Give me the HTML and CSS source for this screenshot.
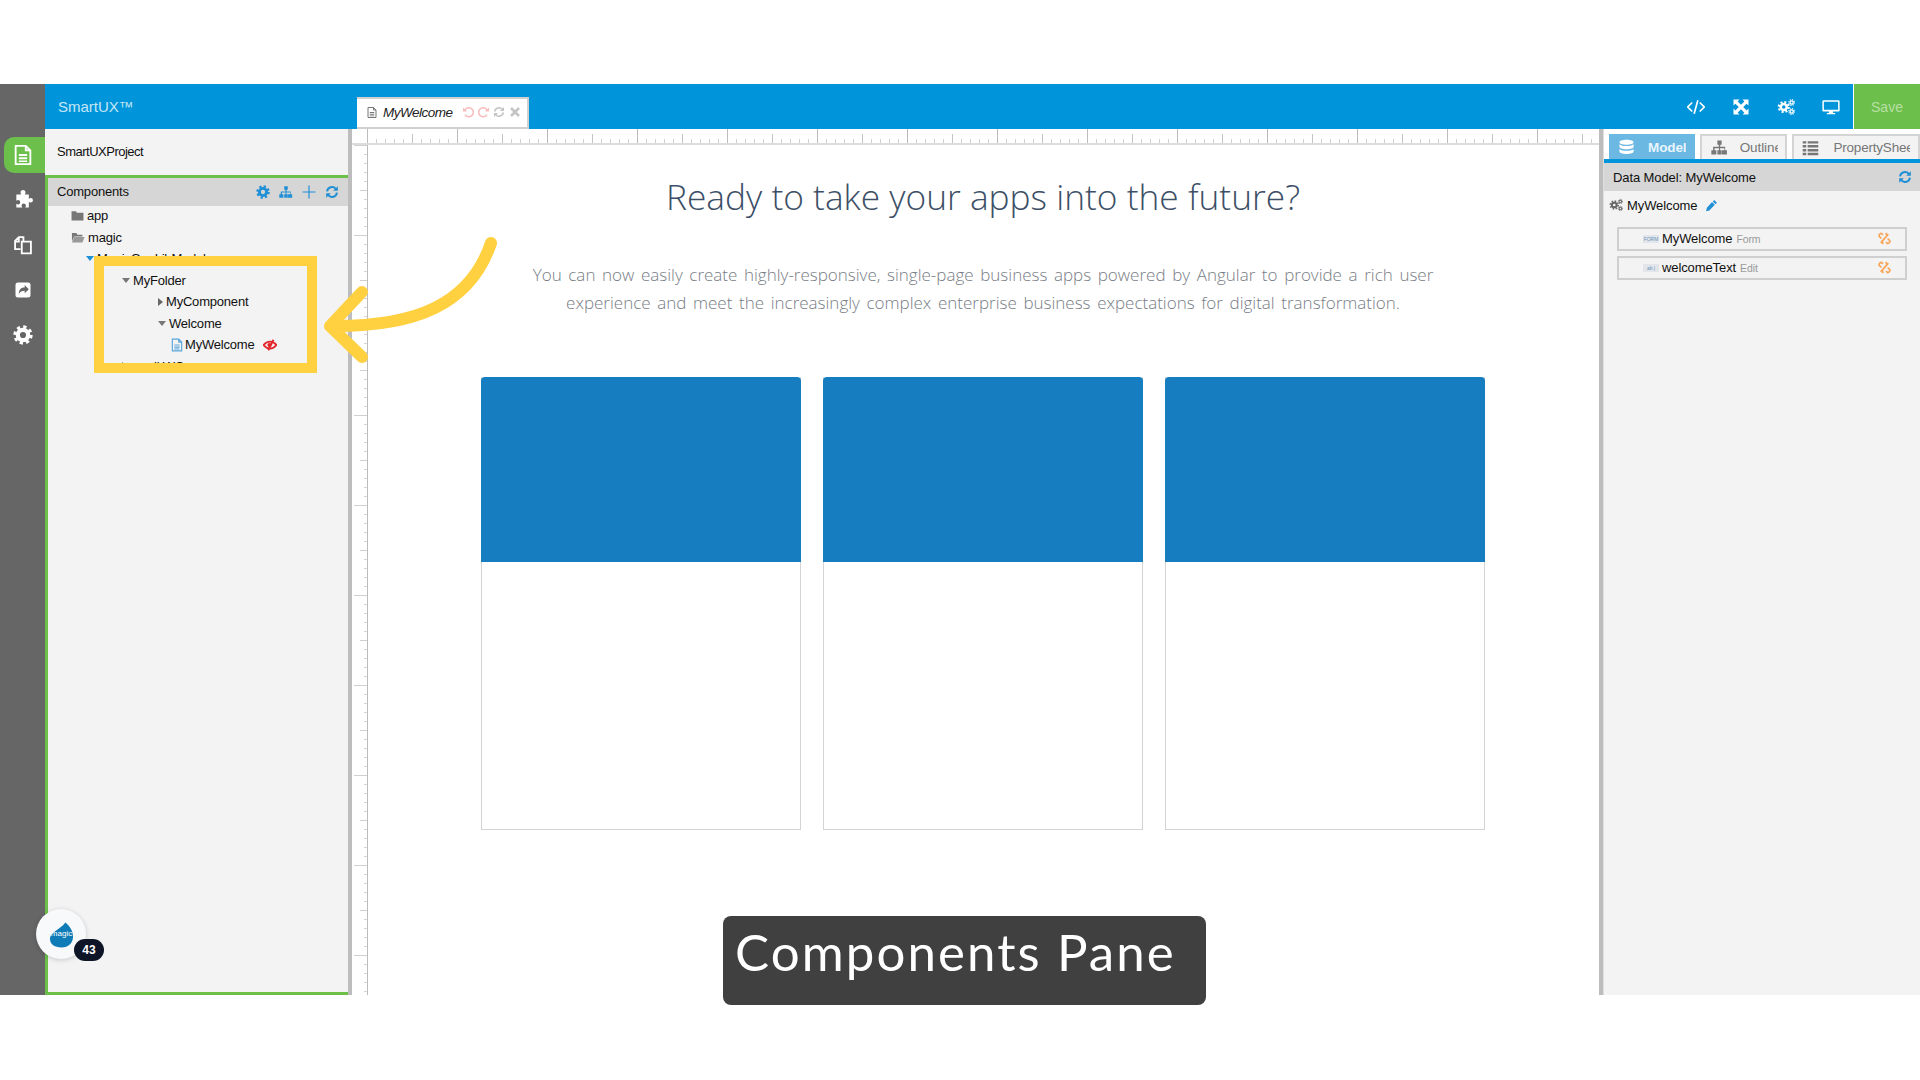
FILE: index.html
```html
<!DOCTYPE html>
<html lang="en">
<head>
  <meta charset="UTF-8">
  <title>SmartUX - Components Pane</title>
  <link rel="stylesheet" href="styles.css">
</head>
<body>
  <svg class="defs" width="0" height="0">
    <symbol id="i-cog" viewBox="0 0 24 24">
      <circle cx="12" cy="12" r="6.2" fill="none" stroke="currentColor" stroke-width="5"/>
      <circle cx="12" cy="12" r="9.6" fill="none" stroke="currentColor" stroke-width="4" stroke-dasharray="3.8 3.74"/>
    </symbol>
    <symbol id="i-cogs" viewBox="0 0 24 24">
      <circle cx="9" cy="12" r="4" fill="none" stroke="currentColor" stroke-width="3.4"/>
      <circle cx="9" cy="12" r="6.6" fill="none" stroke="currentColor" stroke-width="3" stroke-dasharray="2.6 2.58"/>
      <circle cx="19.5" cy="6" r="2.2" fill="none" stroke="currentColor" stroke-width="1.8"/>
      <circle cx="19.5" cy="6" r="3.8" fill="none" stroke="currentColor" stroke-width="1.6" stroke-dasharray="1.5 1.48"/>
      <circle cx="19.5" cy="18" r="2.2" fill="none" stroke="currentColor" stroke-width="1.8"/>
      <circle cx="19.5" cy="18" r="3.8" fill="none" stroke="currentColor" stroke-width="1.6" stroke-dasharray="1.5 1.48"/>
    </symbol>
    <symbol id="i-sitemap" viewBox="0 0 24 24">
      <path fill="currentColor" d="M9 2h6v6h-2v3h7v5h2.5v6h-7v-6H19v-3h-6.200v3H15v6H9v-6h2.200v-3H5v3h2.500v6h-7v-6H3v-5h8V8H9z"/>
    </symbol>
    <symbol id="i-refresh" viewBox="0 0 24 24">
      <path fill="none" stroke="currentColor" stroke-width="3.4" d="M3.500 11A8.600 8.600 0 0 1 18.500 6.500M20.500 13A8.600 8.600 0 0 1 5.500 17.500"/>
      <path fill="currentColor" d="M22 2v8h-8zM2 22v-8h8z"/>
    </symbol>
    <symbol id="i-file" viewBox="0 0 24 24">
      <path fill="none" stroke="currentColor" stroke-width="2" d="M4 2h11l5 5v15H4zM15 2v5h5"/>
      <path fill="currentColor" d="M7.500 11h9v2h-9zM7.500 14.500h9v2h-9zM7.500 18h9v1.500h-9z"/>
    </symbol>
    <symbol id="i-unlink" viewBox="0 0 24 24">
      <path fill="none" stroke="currentColor" stroke-width="2.800" d="M9.500 6.500 7.500 4a3.600 3.600 0 0 0-4 4.500l3.500 3.500M14.500 17.500l2 2.500a3.600 3.600 0 0 0 4-4.500L17 12M6 19 18 5M8 15l1.500 6M16 9l-1.500-6"/>
    </symbol>
  </svg>

  <div class="frame">
    <nav class="rail">
      <div class="rail-item active">
        <svg class="rail-icon"><use href="#i-file"/></svg>
      </div>
      <div class="rail-item">
        <svg class="rail-icon" viewBox="0 0 24 24"><path fill="currentColor" d="M9 3a3 3 0 0 1 6 0c0 1-.6 1.600-.6 2.500H19v5c1-.8 1.500-1 2.200-1a2.600 2.600 0 0 1 0 5.500c-.8 0-1.300-.3-2.200-1V21h-4.500c.7-.9 1-1.400 1-2.200a2.600 2.600 0 0 0-5.200 0c0 .8.300 1.300 1 2.200H4v-4.500c.8.600 1.300.9 2 .9a2.700 2.700 0 0 0 0-5.400c-.7 0-1.200.3-2 .9V5.500h5.600C9.600 4.600 9 4 9 3z"/></svg>
      </div>
      <div class="rail-item">
        <svg class="rail-icon" viewBox="0 0 24 24"><path fill="none" stroke="currentColor" stroke-width="2.200" d="M9 17H2.500V7L7 2.500h5.500V8M10.500 8h11v14h-11zM2.500 8H7V3"/></svg>
      </div>
      <div class="rail-item">
        <svg class="rail-icon" viewBox="0 0 24 24"><path fill="currentColor" fill-rule="evenodd" d="M6 3h12a3 3 0 0 1 3 3v12a3 3 0 0 1-3 3H6a3 3 0 0 1-3-3V6a3 3 0 0 1 3-3zm8 3v3c-4 0-7 2-7 8 1.500-3 3.500-4 7-4v3l5-5z"/></svg>
      </div>
      <div class="rail-item">
        <svg class="rail-icon"><use href="#i-cog"/></svg>
      </div>
    </nav>

    <div class="workspace">
      <header class="topbar">
        <span class="brand">SmartUX™</span>
        <div class="doc-tab">
          <svg class="tab-file"><use href="#i-file"/></svg>
          <span class="tab-name">MyWelcome</span>
          <svg class="tab-act pink" viewBox="0 0 24 24"><path fill="none" stroke="currentColor" stroke-width="3" d="M6 8a9 9 0 1 1 0 9"/><path fill="currentColor" d="M2 3v8h8z"/></svg>
          <svg class="tab-act pink" viewBox="0 0 24 24"><path fill="none" stroke="currentColor" stroke-width="3" d="M18 8a9 9 0 1 0 0 9"/><path fill="currentColor" d="M22 3v8h-8z"/></svg>
          <svg class="tab-act grey"><use href="#i-refresh"/></svg>
          <svg class="tab-act grey" viewBox="0 0 24 24"><path stroke="currentColor" stroke-width="5" d="M4 4l16 16M20 4 4 20"/></svg>
        </div>
        <div class="top-actions">
          <svg class="top-icon" viewBox="0 0 24 24"><path fill="none" stroke="currentColor" stroke-width="2.200" d="M7 6l-6 6 6 6M17 6l6 6-6 6M14.500 3l-5 18"/></svg>
          <svg class="top-icon" viewBox="0 0 24 24"><path fill="currentColor" d="M2 2h8L7.500 4.500 12 9l4.500-4.500L14 2h8v8l-2.500-2.500L15 12l4.500 4.500L22 14v8h-8l2.500-2.500L12 15l-4.500 4.500L10 22H2v-8l2.500 2.500L9 12 4.500 7.500 2 10z"/></svg>
          <svg class="top-icon"><use href="#i-cogs"/></svg>
          <svg class="top-icon" viewBox="0 0 24 24"><path fill="currentColor" fill-rule="evenodd" d="M2 3h20a1.500 1.500 0 0 1 1.500 1.500v12A1.500 1.500 0 0 1 22 18h-7.500l.5 2h2.500v1.500h-11V20H9l.5-2H2A1.500 1.500 0 0 1 .500 16.500v-12A1.500 1.500 0 0 1 2 3zm.500 2v10.500h19V5z"/></svg>
        </div>
        <button class="save">Save</button>
      </header>

      <div class="panes">
        <aside class="left-pane">
          <div class="project">SmartUXProject</div>
          <div class="components">
            <div class="pane-head">
              <span>Components</span>
              <div class="head-icons">
                <svg><use href="#i-cog"/></svg>
                <svg><use href="#i-sitemap"/></svg>
                <svg viewBox="0 0 24 24"><path stroke="currentColor" stroke-width="2" d="M12 1v22M1 12h22"/></svg>
                <svg><use href="#i-refresh"/></svg>
              </div>
            </div>
            <ul class="tree">
              <li class="lvl-0">
                <svg class="folder" viewBox="0 0 24 20"><path fill="#777" d="M1 2h8l2 3h12v14H1z"/></svg>app
              </li>
              <li class="lvl-0">
                <svg class="folder open" viewBox="0 0 24 20"><path fill="#777" d="M1 2h8l2 3h9v3H5L1 17z"/><path fill="#999" d="M5 9h19l-4 10H1z"/></svg>magic
              </li>
              <li class="lvl-1"><i class="caret down blue"></i>MagicGenLibModule</li>
              <li class="lvl-2"><i class="caret down"></i>MyFolder</li>
              <li class="lvl-3"><i class="caret right"></i>MyComponent</li>
              <li class="lvl-3"><i class="caret down"></i>Welcome</li>
              <li class="lvl-4">
                <svg class="tree-file"><use href="#i-file"/></svg>MyWelcome
                <svg class="eye-off" viewBox="0 0 24 20"><path fill="none" stroke="currentColor" stroke-width="3" d="M1 10c3-4 6.500-6 11-6s8 2 11 6c-3 4-6.500 6-11 6S4 14 1 10z"/><circle cx="11" cy="10" r="3.500" fill="currentColor"/><path stroke="currentColor" stroke-width="3" d="M18 1 9 19"/></svg>
              </li>
              <li class="lvl-2"><i class="caret right"></i>small WC</li>
            </ul>
          </div>
        </aside>

        <div class="splitter"></div>

        <section class="stage">
          <div class="ruler-top"></div>
          <div class="stage-body">
            <div class="ruler-left"></div>
            <main class="canvas">
              <h1>Ready to take your apps into the future?</h1>
              <p>You can now easily create highly-responsive, single-page business apps powered by Angular to provide a rich user<br>experience and meet the increasingly complex enterprise business expectations for digital transformation.</p>
              <div class="cards">
                <div class="card"><div class="card-top"></div></div>
                <div class="card"><div class="card-top"></div></div>
                <div class="card"><div class="card-top"></div></div>
              </div>
            </main>
          </div>
        </section>

        <div class="splitter right"></div>

        <aside class="right-pane">
          <div class="side-tabs">
            <div class="side-tab active model">
              <svg viewBox="0 0 24 24"><path fill="currentColor" d="M12 1c6 0 10 1.500 10 3.500S18 8 12 8 2 6.500 2 4.500 6 1 12 1zM2 7.500C4 9.500 8 10 12 10s8-.5 10-2.500V11c0 2-4 3.500-10 3.500S2 13 2 11zM2 14c2 2 6 2.500 10 2.500s8-.5 10-2.500v3.500c0 2-4 3.500-10 3.500S2 19.500 2 17.500z"/></svg>
              <span class="side-label">Models</span>
            </div>
            <div class="side-tab outline">
              <svg><use href="#i-sitemap"/></svg>
              <span class="side-label">Outline</span>
            </div>
            <div class="side-tab sheet">
              <svg viewBox="0 0 24 24"><path fill="currentColor" d="M1 3h5v3.500H1zM8 3h15v3.500H8zM1 8.500h5V12H1zM8 8.500h15V12H8zM1 14h5v3.500H1zM8 14h15v3.500H8zM1 19.500h5V23H1zM8 19.500h15V23H8z"/></svg>
              <span class="side-label">PropertySheet</span>
            </div>
          </div>
          <div class="side-head">
            <span>Data Model: MyWelcome</span>
            <svg><use href="#i-refresh"/></svg>
          </div>
          <div class="model-name">
            <svg class="model-cogs"><use href="#i-cogs"/></svg>
            <span>MyWelcome</span>
            <svg class="pencil" viewBox="0 0 24 24"><path fill="currentColor" d="M17 2l5 5-2.500 2.500-5-5zM13 5.500l5 5L8 21l-6 1.500L3.500 16z"/></svg>
          </div>
          <div class="model-row">
            <span class="chip">FORM</span>
            <span class="row-name">MyWelcome</span>
            <span class="row-kind">Form</span>
            <svg class="unlink"><use href="#i-unlink"/></svg>
          </div>
          <div class="model-row">
            <span class="chip">ab |</span>
            <span class="row-name">welcomeText</span>
            <span class="row-kind">Edit</span>
            <svg class="unlink"><use href="#i-unlink"/></svg>
          </div>
        </aside>
      </div>
    </div>
  </div>

  <!-- annotation layer that sits on top of the screenshot -->
  <div class="callout"></div>
  <svg class="arrow" viewBox="0 0 200 130">
    <path fill="none" stroke="#ffd040" stroke-width="12" stroke-linecap="round" stroke-linejoin="round" d="M171 13C150 75 95 97 10 96M42 62 10 96l32 31"/>
  </svg>
  <div class="fab">
    <svg viewBox="0 0 26 28" class="drop">
      <path fill="#0f7cb8" d="M17 1c5 4 8 9 8 15 0 6-5 11-12 11C6 27 1 24 1 18 1 11 11 9 17 1z"/>
    </svg>
    <span class="drop-text">magic</span>
  </div>
  <span class="badge">43</span>
  <div class="caption">Components Pane</div>
</body>
</html>
```

FILE: styles.css
```css
* {
  box-sizing: border-box;
  margin: 0;
  padding: 0;
}

html, body {
  height: 100%;
  overflow: hidden;
}

body {
  position: relative;
  background-color: #fff;
  font-family: "Liberation Sans", Arial, sans-serif;
  padding-top: 84px;
}

.defs {
  position: absolute;
}

.frame {
  display: flex;
  height: 911px;
}

/* left rail */
.rail {
  width: 45px;
  flex: none;
  background-color: #666;
  padding: 53px 0 0 4px;
  display: flex;
  flex-direction: column;
  color: #fff;
}

.rail-item {
  height: 36px;
  margin-bottom: 9px;
  display: flex;
  align-items: center;
  justify-content: center;
  padding-right: 4px;
}

.rail-item.active {
  background-color: #6cbf4b;
  border-radius: 10px 0 0 10px;
}

.rail-icon {
  width: 20px;
  height: 20px;
}

.rail-item.active .rail-icon {
  width: 22px;
  height: 22px;
}

.workspace {
  flex: 1;
  min-width: 0;
  display: flex;
  flex-direction: column;
}

/* top bar */
.topbar {
  height: 45px;
  flex: none;
  background-color: #0095da;
  display: flex;
  align-items: flex-end;
  position: relative;
}

.brand {
  width: 312px;
  padding: 0 0 13px 13px;
  color: #c5e6f7;
  font-size: 15px;
  align-self: flex-end;
  line-height: 18px;
}

.doc-tab {
  width: 172px;
  height: 32px;
  background-color: #fff;
  border: 2px solid #d0d0d0;
  border-width: 2px 2px 2px 0;
  display: flex;
  align-items: center;
  padding: 0 0 2px 9px;
}

.tab-file {
  width: 12px;
  height: 13px;
  color: #777;
  margin-right: 5px;
}

.tab-name {
  width: 79px;
  font-size: 13.500px;
  letter-spacing: -.5px;
  font-style: italic;
  color: #222;
}

.tab-act {
  width: 12px;
  height: 12px;
  margin-right: 3.500px;
}

.tab-act.pink {
  color: #f7bcbc;
}

.tab-act.grey {
  color: #c4c4c4;
}

.top-actions {
  margin-left: auto;
  height: 45px;
  display: flex;
  align-items: center;
  gap: 27px;
  padding-right: 13px;
  color: #fff;
}

.top-icon {
  width: 18px;
  height: 18px;
  display: block;
}

.save {
  width: 67px;
  height: 45px;
  border: none;
  border-left: 1px solid #fff;
  background-color: #6cbf4b;
  color: #b6dfa3;
  font-family: inherit;
  font-size: 14px;
}

.panes {
  flex: 1;
  min-height: 0;
  display: flex;
}

/* components pane */
.left-pane {
  width: 303px;
  flex: none;
  background-color: #f3f3f3;
  display: flex;
  flex-direction: column;
}

.project {
  height: 46px;
  padding: 0 0 2px 12px;
  display: flex;
  align-items: center;
  font-size: 13px;
  color: #111;
  letter-spacing: -.5px;
}

.components {
  flex: 1;
  border: 3px solid #6cc04a;
  border-right: none;
  overflow: hidden;
}

.pane-head {
  height: 28px;
  background-color: #d6d6d6;
  display: flex;
  align-items: center;
  justify-content: space-between;
  padding: 0 9px 1px 9px;
  font-size: 13px;
  color: #111;
  letter-spacing: -.2px;
}

.head-icons {
  display: flex;
  gap: 9px;
  color: #1f8fd6;
}

.head-icons svg {
  width: 14px;
  height: 14px;
}

.tree {
  list-style: none;
  margin-top: -1px;
  font-size: 13px;
  letter-spacing: -.2px;
  color: #111;
}

.tree li {
  height: 21.500px;
  display: flex;
  align-items: center;
  white-space: nowrap;
}

.lvl-0 { padding-left: 23px; }
.lvl-1 { padding-left: 38px; }
.lvl-2 { padding-left: 74px; }
.lvl-3 { padding-left: 110px; }
.lvl-4 { padding-left: 122px; }

.folder {
  width: 13px;
  height: 11px;
  margin-right: 3px;
}

.folder.open {
  width: 14px;
  margin-right: 3px;
}

.caret {
  width: 0;
  height: 0;
  margin-right: 3px;
  border-style: solid;
}

.caret.down {
  border-width: 5px 4px 0;
  border-color: #777 transparent transparent;
}

.caret.down.blue {
  border-top-color: #1f8fd6;
}

.caret.right {
  border-width: 4px 0 4px 5px;
  border-color: transparent transparent transparent #666;
}

.tree-file {
  width: 14px;
  height: 14px;
  color: #5aa6dc;
  margin-right: 1px;
}

.eye-off {
  width: 14px;
  height: 12px;
  margin-left: 9px;
  color: #e5242a;
}

.splitter {
  width: 4px;
  flex: none;
  background-color: #bdbdbd;
}

.splitter.right {
  width: 5px;
  border-right: 1px solid #dedede;
}

/* canvas with rulers */
.stage {
  flex: 1;
  min-width: 0;
  display: flex;
  flex-direction: column;
  background-color: #fff;
}

.ruler-top {
  height: 16px;
  flex: none;
  border-bottom: 2px solid #dcdcdc;
  background-color: #fff;
  background-image:
    repeating-linear-gradient(90deg, #bcbcbc 0 1px, transparent 1px 90px),
    repeating-linear-gradient(90deg, #c4c4c4 0 1px, transparent 1px 45px),
    repeating-linear-gradient(90deg, #cfcfcf 0 1px, transparent 1px 9px);
  background-size: 100% 14px, 100% 9px, 100% 4px;
  background-position: 15px 0, 15px 5px, 15px 10px;
  background-repeat: no-repeat;
}

.stage-body {
  flex: 1;
  min-height: 0;
  display: flex;
}

.ruler-left {
  width: 16px;
  flex: none;
  border-right: 1px solid #bcbcbc;
  background-image:
    repeating-linear-gradient(180deg, #d0d0d0 0 1px, transparent 1px 90px),
    repeating-linear-gradient(180deg, #d0d0d0 0 1px, transparent 1px 45px),
    repeating-linear-gradient(180deg, #d4d4d4 0 1px, transparent 1px 9px);
  background-size: 13px 100%, 7px 100%, 3px 100%;
  background-position: 2px 0, 8px 0, 12px 0;
  background-repeat: no-repeat;
}

.canvas {
  flex: 1;
  min-width: 0;
  padding-right: 1px;
  font-family: "Open Sans", sans-serif;
  text-align: center;
}

.canvas h1 {
  margin-top: 28px;
  font-size: 35.300px;
  line-height: 46px;
  font-weight: 300;
  color: #3d4f66;
}

.canvas p {
  margin-top: 42px;
  font-size: 17px;
  word-spacing: 2.200px;
  line-height: 28px;
  font-weight: 300;
  color: #777d85;
}

.cards {
  margin-top: 60px;
  display: flex;
  justify-content: center;
  gap: 22px;
}

.card {
  width: 320px;
  height: 453px;
  border: 1px solid #d4d4d4;
  border-top: none;
}

.card-top {
  height: 185px;
  margin: 0 -1px;
  background-color: #167dc0;
  border-radius: 4px 4px 0 0;
}

/* right pane */
.right-pane {
  width: 316px;
  flex: none;
  background-color: #f3f3f3;
  font-size: 13px;
  letter-spacing: -.1px;
}

.side-tabs {
  height: 34px;
  padding: 5px 0 0 5px;
  display: flex;
  gap: 5px;
  background-color: #fff;
  border-bottom: 4px solid #0095da;
}

.side-tab {
  height: 25px;
  display: flex;
  align-items: center;
  background-color: #f3f3f3;
  border: 2px solid #d4d4d4;
  border-bottom: none;
  color: #777;
  font-size: 13.500px;
  line-height: 24px;
}

.side-tab svg {
  width: 17px;
  height: 17px;
  flex: none;
}

.side-tab.active {
  background-color: #6bb8e3;
  border-color: #6bb8e3;
  color: #fff;
}

.side-label {
  overflow: hidden;
  white-space: nowrap;
}

.model {
  width: 86px;
  padding-left: 7px;
}

.model .side-label {
  width: 38px;
  margin-left: 13px;
  font-weight: bold;
  color: #e8f5fc;
}

.outline {
  width: 88px;
  padding-left: 9px;
}

.outline .side-label {
  width: 38px;
  margin-left: 12px;
}

.sheet {
  width: 128px;
  padding-left: 8px;
}

.sheet .side-label {
  width: 77px;
  margin-left: 14px;
  letter-spacing: -.2px;
}

.side-head {
  height: 28px;
  background-color: #d6d6d6;
  display: flex;
  align-items: center;
  justify-content: space-between;
  padding: 0 8px 0 9px;
  color: #111;
}

.side-head svg {
  width: 14px;
  height: 14px;
  color: #1f8fd6;
}

.model-name {
  height: 28px;
  margin-bottom: 8px;
  padding-left: 5px;
  display: flex;
  align-items: center;
  color: #111;
}

.model-cogs {
  width: 14px;
  height: 14px;
  margin-right: 4px;
  color: #666;
}

.pencil {
  width: 13px;
  height: 13px;
  margin-left: 8px;
  color: #1f8fd6;
}

.model-row {
  width: 290px;
  height: 24px;
  margin: 0 0 5px 13px;
  border: 2px solid #cfcfcf;
  display: flex;
  align-items: center;
  padding: 0 0 1px 24px;
  color: #111;
}

.chip {
  width: 16px;
  height: 8px;
  margin-right: 3px;
  background-color: #e2e6ea;
  font-size: 5px;
  line-height: 8px;
  letter-spacing: 0;
  text-align: center;
  color: #6b93b8;
  overflow: hidden;
}

.row-kind {
  margin-left: 4px;
  font-size: 10.500px;
  color: #999;
}

.unlink {
  width: 15px;
  height: 15px;
  margin-left: auto;
  margin-right: 13px;
  color: #f9a65a;
}

/* overlays */
.callout {
  position: absolute;
  left: 94px;
  top: 256px;
  width: 223px;
  height: 117px;
  border: 10px solid #ffd040;
}

.arrow {
  position: absolute;
  left: 320px;
  top: 230px;
  width: 200px;
  height: 130px;
  overflow: visible;
}

.fab {
  position: absolute;
  left: 36px;
  top: 909px;
  width: 50px;
  height: 50px;
  border-radius: 50%;
  background-color: #f8f9fb;
  box-shadow: 0 1px 5px rgba(0,0,0,0.18);
}

.drop {
  position: absolute;
  left: 13px;
  top: 12px;
  width: 25px;
  height: 28px;
}

.drop-text {
  position: absolute;
  left: 1px;
  right: 0;
  top: 20px;
  text-align: center;
  color: #fff;
  font-size: 8px;
  line-height: 10px;
}

.badge {
  position: absolute;
  left: 74px;
  top: 939px;
  width: 30px;
  height: 22px;
  border-radius: 11px;
  background-color: #0d1526;
  color: #fff;
  font-size: 12px;
  font-weight: bold;
  line-height: 22px;
  text-align: center;
}

.caption {
  position: absolute;
  left: 723px;
  top: 916px;
  width: 483px;
  height: 89px;
  padding: 0 0 0 12px;
  border-radius: 8px;
  background-color: #404040;
  color: #fff;
  font-family: Lato, sans-serif;
  font-size: 51px;
  letter-spacing: 2.100px;
  line-height: 72px;
  white-space: nowrap;
}
```
